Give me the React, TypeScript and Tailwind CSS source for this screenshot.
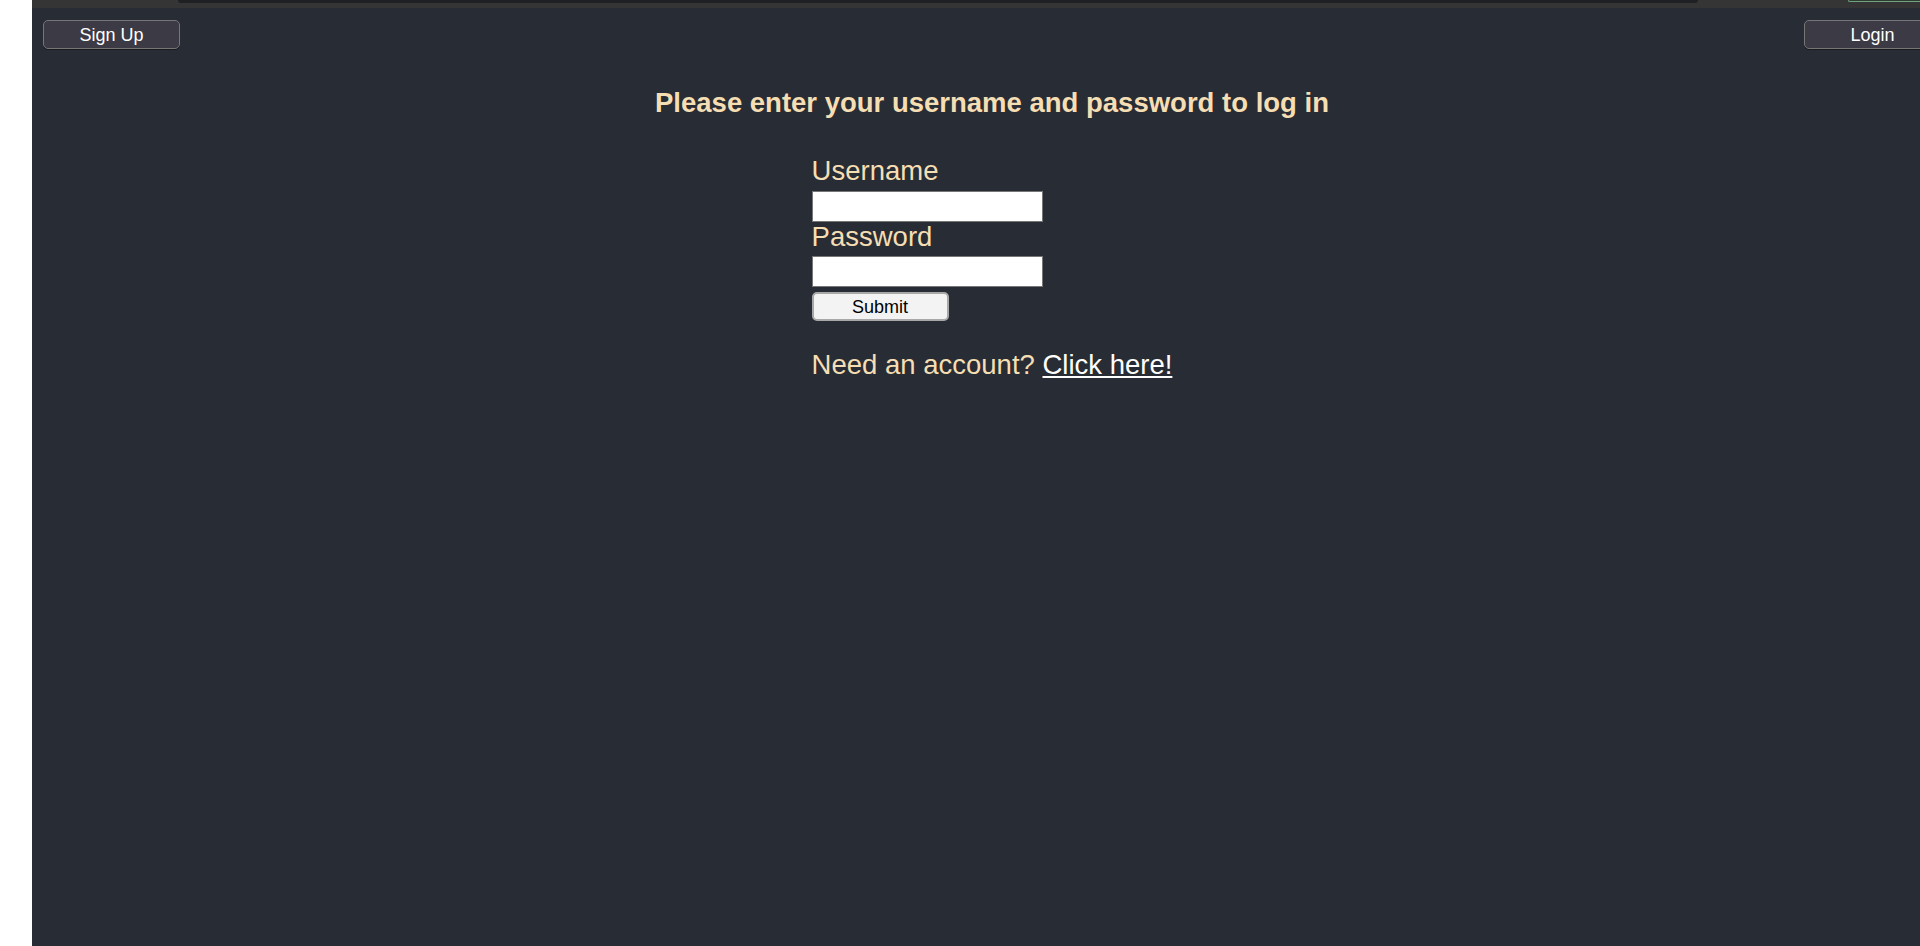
import React from "react";

export default function App() {
  return (
    <div className="flex h-[946px] w-full overflow-hidden bg-white" style={{ fontFamily: '"Liberation Sans", Arial, sans-serif' }}>
      <div className="w-[32px] shrink-0 bg-white" />
      <div className="flex w-[1920px] shrink-0 flex-col bg-[#282c34]">
        {/* top strip */}
        <div className="flex h-[8px] shrink-0 items-start bg-[#353535]">
          <div className="ml-[146px] h-[3px] w-[1520px] rounded-b-[5px] bg-[#1f2024]" />
          <div className="ml-[150px] h-[2px] flex-1 rounded-bl-[6px] border-b border-l border-[#6fa37d] bg-[#2f3a33]" />
        </div>

        {/* nav buttons */}
        <div className="mt-[12px] flex items-center justify-between px-[11px]">
          <button className="flex h-[29px] w-[137px] items-center justify-center rounded-[5px] border border-[#767676] bg-[#3b3a45] text-[18px] leading-none text-white shadow-[0_1px_0_#1a1a1e]">
            Sign Up
          </button>
          <button className="flex h-[29px] w-[137px] items-center justify-center rounded-[5px] border border-[#767676] bg-[#3b3a45] text-[18px] leading-none text-white shadow-[0_1px_0_#1a1a1e]">
            Login
          </button>
        </div>

        {/* heading */}
        <h2 className="mt-[38px] text-center text-[27.5px] font-bold leading-[32px] text-[#f5deb3]">
          Please enter your username and password to log in
        </h2>

        {/* form */}
        <div className="flex justify-center">
          <form className="mt-[36px] flex w-fit flex-col items-start text-[27.5px] leading-[32px] text-[#f5deb3]">
            <label>Username</label>
            <input type="text" className="mt-[4px] h-[31px] w-[231px] border border-[#767676] bg-white outline-none" />
            <label className="-mt-[1px]">Password</label>
            <input type="password" className="mt-[3px] h-[31px] w-[231px] border border-[#767676] bg-white outline-none" />
            <button
              type="button"
              className="mt-[5px] flex h-[29px] w-[137px] items-center justify-center rounded-[5px] border-2 border-[#a8a8a8] bg-[#f3f3f3] text-[18px] leading-none text-black"
            >
              Submit
            </button>
            <p className="mt-[28px] whitespace-nowrap">
              Need an account?{" "}
              <a href="#" className="text-white underline">
                Click here!
              </a>
            </p>
          </form>
        </div>
      </div>
    </div>
  );
}
